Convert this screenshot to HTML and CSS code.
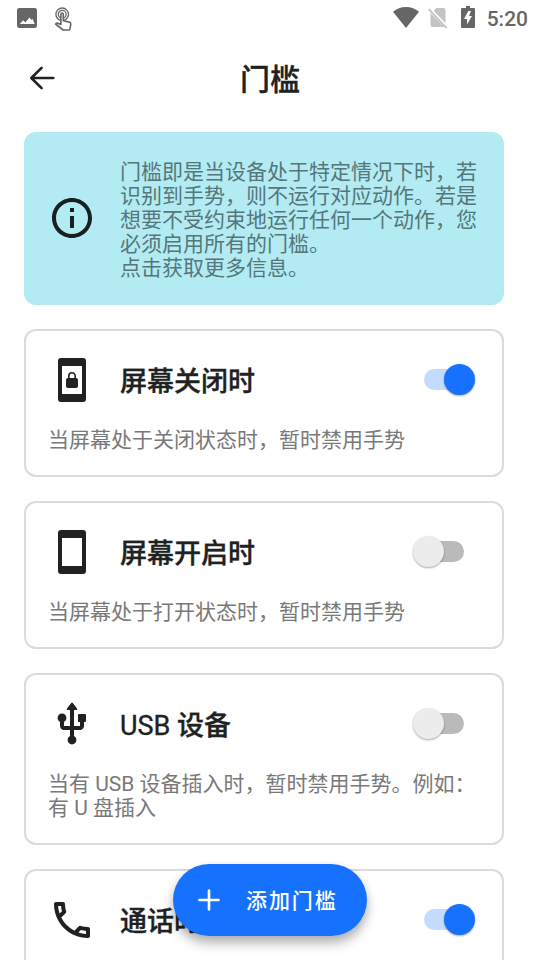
FILE: index.html
```
<!DOCTYPE html>
<html lang="zh-CN">
<head>
<meta charset="utf-8">
<title>门槛</title>
<link rel="stylesheet" href="styles.css">
</head>
<body>
<div class="screen">
  <header class="status">
    <svg class="s-image" viewBox="3 3 18 18"><path d="M21 19V5a2 2 0 0 0-2-2H5a2 2 0 0 0-2 2v14a2 2 0 0 0 2 2h14a2 2 0 0 0 2-2z"/><path class="cut" d="M5.500 17.500l3-3.500 2 2 3.800-4.500 1.600 2.200 1-1 2.100 4.800z"/></svg>
    <svg class="s-touch" viewBox="0 0 18 24"><circle cx="8.200" cy="7.300" r="6.300"/><circle cx="8.200" cy="7.300" r="3.900"/><path class="hand" d="M6.900 17.500V7.400q0-1.400 1.200-1.400t1.200 1.400v6.400l6 1.300q1.500.4 1.500 2l-.8 4.600q-.3 1.300-1.600 1.300H9.200L1.600 17l.8-.8q.7-.4 1.600.1z"/></svg>
    <span class="grow"></span>
    <svg class="s-wifi" viewBox="0 0 26 21"><path d="M13 21L0 4.700C3.600 1.700 8 0 13 0s9.400 1.700 13 4.700z"/></svg>
    <svg class="s-sim" viewBox="0 0 20 21"><path d="M8 0h7.500q2 0 2 2v13.200L5.700 3z"/><path d="M2.500 5.300L16.500 19H4.500q-2 0-2-2z"/><path class="slash" d="M.7 1.200l18 19"/></svg>
    <svg class="s-battery" viewBox="0 0 14 22"><path d="M5 0h4v2h4q1 0 1 1v18q0 1-1 1H1q-1 0-1-1V3q0-1 1-1h4z"/><path class="cut" d="M7.300 5L3 13h3v5.500L11 10H8l2-5z"/></svg>
    <span class="clock">5:20</span>
  </header>

  <nav class="appbar">
    <svg class="back" viewBox="0 0 26 24"><path d="M24.300 12H2.500M12.600 1.800L2.300 12l10.300 10.200"/></svg>
    <h1>门槛</h1>
  </nav>

  <main class="list">
    <section class="banner">
      <svg class="icon" viewBox="0 0 24 24"><path d="M11 7h2v2h-2zm0 4h2v6h-2zm1-9C6.480 2 2 6.480 2 12s4.480 10 10 10 10-4.480 10-10S17.520 2 12 2zm0 18c-4.410 0-8-3.590-8-8s3.590-8 8-8 8 3.590 8 8-3.590 8-8 8z"/></svg>
      <p>门槛即是当设备处于特定情况下时，若识别到手势，则不运行对应动作。若是想要不受约束地运行任何一个动作，您必须启用所有的门槛。<br>点击获取更多信息。</p>
    </section>

    <section class="card">
      <div class="row">
        <svg class="icon" viewBox="0 0 24 24"><path fill-rule="evenodd" d="M6.500 1h11A1.500 1.500 0 0 1 19 2.500v19a1.500 1.500 0 0 1-1.500 1.500h-11A1.500 1.500 0 0 1 5 21.500v-19A1.500 1.500 0 0 1 6.500 1zM7 5v14h10V5z"/><path d="M10 11h4a1 1 0 0 1 1 1v3a1 1 0 0 1-1 1h-4a1 1 0 0 1-1-1v-3a1 1 0 0 1 1-1z"/><path class="shackle" d="M10.400 11.300V10a1.600 1.600 0 0 1 3.200 0v1.300"/></svg>
        <h2>屏幕关闭时</h2>
        <span class="switch on"><i></i></span>
      </div>
      <p>当屏幕处于关闭状态时，暂时禁用手势</p>
    </section>

    <section class="card">
      <div class="row">
        <svg class="icon" viewBox="0 0 24 24"><path fill-rule="evenodd" d="M6.500 1h11A1.500 1.500 0 0 1 19 2.500v19a1.500 1.500 0 0 1-1.500 1.500h-11A1.500 1.500 0 0 1 5 21.500v-19A1.500 1.500 0 0 1 6.500 1zM7 5v14h10V5z"/></svg>
        <h2>屏幕开启时</h2>
        <span class="switch"><i></i></span>
      </div>
      <p>当屏幕处于打开状态时，暂时禁用手势</p>
    </section>

    <section class="card">
      <div class="row">
        <svg class="icon" viewBox="0 0 24 24"><path d="M15.500 7a.5.5 0 0 0-.5.500V11h1v2h-3V5h1.200q.7-.1.300-.7L12.400 1.500q-.4-.5-.8 0L9.500 4.300q-.4.600.3.700H11v8H8v-2.070c.7-.37 1.200-1.080 1.200-1.930 0-1.210-.99-2.200-2.200-2.200-1.210 0-2.200.99-2.200 2.200 0 .85.500 1.560 1.200 1.930V13c0 1.110.89 2 2 2h3v3.050c-.71.370-1.200 1.100-1.200 1.950 0 1.220.99 2.200 2.200 2.200s2.200-.98 2.200-2.200c0-.85-.49-1.580-1.200-1.950V15h3c1.110 0 2-.89 2-2v-2h.5a.5.500 0 0 0 .5-.5v-3a.5.500 0 0 0-.5-.5z"/></svg>
        <h2><span class="latin">USB</span> 设备</h2>
        <span class="switch"><i></i></span>
      </div>
      <p>当有 USB 设备插入时，暂时禁用手势。例如：有 U 盘插入</p>
    </section>

    <section class="card tall">
      <div class="row">
        <svg class="icon" viewBox="0 0 24 24"><path d="M6.540 5c.06.890.21 1.760.45 2.590l-1.200 1.200c-.41-1.200-.67-2.470-.76-3.790h1.510m9.860 12.020c.85.240 1.720.390 2.600.450v1.490c-1.320-.09-2.590-.35-3.800-.75l1.200-1.190M7.500 3H4c-.55 0-1 .45-1 1 0 9.390 7.610 17 17 17 .55 0 1-.45 1-1v-3.490c0-.55-.45-1-1-1-1.240 0-2.450-.2-3.570-.57a.84.840 0 0 0-.31-.05c-.26 0-.51.1-.71.290l-2.200 2.200a15.150 15.150 0 0 1-6.590-6.590l2.200-2.200c.28-.28.360-.67.250-1.020A11.360 11.360 0 0 1 8.500 4c0-.55-.45-1-1-1z"/></svg>
        <h2>通话时</h2>
        <span class="switch on"><i></i></span>
      </div>
    </section>
  </main>

  <button class="fab">
    <svg viewBox="0 0 22 22"><path d="M11 1.500v19M1.500 11h19"/></svg>
    <span>添加门槛</span>
  </button>
</div>
</body>
</html>
```
FILE: styles.css
```
* { box-sizing: border-box; }
body { margin: 0; background: #fff; }
h1, h2, p { margin: 0; }
svg { display: block; flex: none; overflow: visible; }

.screen {
  position: relative;
  width: 540px;
  height: 960px;
  overflow: hidden;
  background: #fff;
  color: #202121;
  font-family: Roboto, "Noto Sans CJK SC", sans-serif;
}

.status {
  display: flex;
  align-items: flex-start;
  height: 36px;
  padding: 0 12px 0 17px;
  fill: #666;
  color: #666;
}
.status .cut { fill: #fff; }
.grow { flex: 1; }
.s-image { width: 20px; height: 20px; margin-top: 8px; }
.s-touch { width: 18px; height: 24px; margin: 7px 0 0 17px; fill: none; stroke: #666; stroke-width: 1.3; }
.s-touch .hand { fill: #fff; stroke-width: 1.600; stroke-linejoin: round; }
.s-wifi { width: 26px; height: 21px; margin: 7px 9px 0 0; }
.s-sim { width: 20px; height: 21px; margin: 8px 13px 0 0; fill: #c4c4c4; }
.slash { fill: none; stroke: #c4c4c4; stroke-width: 1.800; }
.s-battery { width: 14px; height: 22px; margin-top: 6px; }
.clock { margin: 6px 0 0 11.500px; font-size: 21px; line-height: 26px; font-weight: 500; }

.appbar {
  display: grid;
  grid-template-columns: 60px 1fr 60px;
  align-items: center;
  height: 84px;
}
.back { width: 26px; height: 24px; margin-left: 29px; fill: none; stroke: #202121; stroke-width: 2.600; stroke-linecap: round; stroke-linejoin: round; }
h1 { padding-top: 4px; font-size: 30px; line-height: 44px; font-weight: 500; text-align: center; }
h1, h2 { -webkit-text-stroke: .35px #202121; }

.list {
  display: flex;
  flex-direction: column;
  gap: 24px;
  width: 504px;
  padding: 12px 0 0 24px;
}
.icon { width: 48px; height: 48px; fill: #202121; }
.banner {
  display: flex;
  align-items: flex-start;
  gap: 24px;
  height: 173px;
  padding: 28px 24px 0;
  border-radius: 12px;
  background: #b2ebf2;
}
.banner .icon { margin-top: 34px; fill: #182021; }
.banner p { width: 360px; font-size: 21px; line-height: 24px; color: #55777a; }

.card {
  padding: 25px 22px 23px;
  border: 2px solid #dadae0;
  border-radius: 12px;
}
.card.tall { height: 148px; }
.row { display: flex; align-items: center; height: 48px; }
h2 { flex: 1; margin-left: 24px; padding-top: 4px; font-size: 27px; line-height: 40px; font-weight: 500; }
.latin { font-weight: 400; }
.card p { margin-top: 24px; font-size: 21px; line-height: 24px; color: #797979; }

.switch {
  display: flex;
  align-items: center;
  width: 40px;
  height: 21px;
  margin: 0 16px 1px 0;
  border-radius: 11px;
  background: #bababa;
}
.switch i {
  flex: none;
  width: 31px;
  height: 31px;
  margin-left: -11px;
  border-radius: 50%;
  background: #ececec;
  box-shadow: 0 1px 2px rgba(0, 0, 0, .35);
}
.switch.on { background: #c3dbff; }
.switch.on i { margin-left: 20px; background: #1672fe; }
.shackle { fill: none; stroke: #202121; stroke-width: .8; }

.fab {
  position: absolute;
  left: 173px;
  top: 864px;
  display: flex;
  align-items: center;
  width: 194px;
  height: 72px;
  padding: 0 0 0 25px;
  border: 0;
  border-radius: 36px;
  background: #1672fe;
  color: #fff;
  font: 500 21px/30px Roboto, "Noto Sans CJK SC", sans-serif;
  letter-spacing: 1.900px;
  box-shadow: 0 8px 12px rgba(0, 0, 0, .24), 0 3px 8px rgba(0, 0, 0, .12);
}
.fab span { padding-top: 2px; }
.fab svg { width: 22px; height: 22px; margin-right: 26px; fill: none; stroke: #fff; stroke-width: 2.600; stroke-linecap: round; }
```
